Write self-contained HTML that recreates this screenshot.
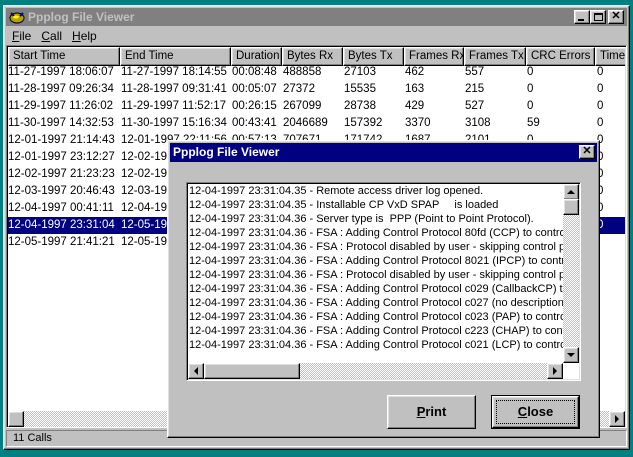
<!DOCTYPE html>
<html><head><style>
*{margin:0;padding:0;box-sizing:border-box}
body{width:633px;height:457px;background:#008080;position:relative;overflow:hidden;font-family:"Liberation Sans",sans-serif;font-size:11px;color:#000}
.abs{position:absolute}
.raised{background:#c0c0c0;border-top:1px solid #fff;border-left:1px solid #fff;border-right:1px solid #000;border-bottom:1px solid #000;box-shadow:inset -1px -1px 0 #808080,inset 1px 1px 0 #dfdfdf}
.sunk{border-top:1px solid #808080;border-left:1px solid #808080;border-right:1px solid #fff;border-bottom:1px solid #fff;box-shadow:inset 1px 1px 0 #000,inset -1px -1px 0 #dfdfdf}
.hdr{position:absolute;top:0;height:19px;line-height:17px;padding-left:4px;font-size:11.5px;white-space:nowrap;overflow:hidden}
.row{position:absolute;left:0;height:17px;line-height:17px;width:620px;font-size:11.5px;white-space:nowrap}
.row span{position:absolute}
.sel{background:#000080;color:#fff}
.dither{background-color:#c0c0c0;background-image:repeating-conic-gradient(#fff 0 25%,#c0c0c0 0 50%);background-size:2px 2px}
.btn{position:absolute;width:16px;height:16px}
.log div{height:14px;line-height:14px;white-space:nowrap;font-size:11px;padding-left:1px}
</style></head><body>
<div class="abs raised" style="left:3px;top:5px;width:627px;height:445px"></div>
<div class="abs" style="left:6px;top:8px;width:621px;height:18px;background:#808080"></div>
<div class="abs" style="left:9px;top:9px;width:16px;height:15px;">
<svg width="16" height="15"><ellipse cx="8" cy="9" rx="7" ry="5" fill="#b8a000" stroke="#000"/><path d="M2 4 L5 7 M14 4 L11 7" stroke="#0000a0" stroke-width="2"/><ellipse cx="7" cy="8" rx="3" ry="1.5" fill="#ff0"/></svg></div>
<div class="abs" style="left:28px;top:9px;color:#c0c0c0;font-weight:bold;font-size:12px;line-height:16px">Ppplog File Viewer</div>
<div class="btn raised" style="left:574px;top:10px;width:16px;height:14px"><div class="abs" style="left:3px;top:8px;width:6px;height:2px;background:#000"></div></div>
<div class="btn raised" style="left:590px;top:10px;width:16px;height:14px"><div class="abs" style="left:3px;top:2px;width:9px;height:8px;border:1px solid #000;border-top-width:2px"></div></div>
<div class="btn raised" style="left:608px;top:10px;width:16px;height:14px;font-size:11px;font-weight:bold;text-align:center;line-height:11px">✕</div>
<div class="abs" style="left:12px;top:29px;font-size:12px;line-height:14px"><u>F</u>ile&nbsp;&nbsp;&nbsp;<u>C</u>all&nbsp;&nbsp;&nbsp;<u>H</u>elp</div>
<div class="abs sunk" style="left:6px;top:45px;width:621px;height:383px;background:#fff"></div>
<div class="abs" style="left:8px;top:47px;width:617px;height:364px;overflow:hidden">
 <div class="hdr raised" style="left:0;width:112px">Start Time</div>
 <div class="hdr raised" style="left:112px;width:111px">End Time</div>
 <div class="hdr raised" style="left:223px;width:51px">Duration</div>
 <div class="hdr raised" style="left:274px;width:61px">Bytes Rx</div>
 <div class="hdr raised" style="left:335px;width:61px">Bytes Tx</div>
 <div class="hdr raised" style="left:396px;width:60px">Frames Rx</div>
 <div class="hdr raised" style="left:456px;width:62px">Frames Tx</div>
 <div class="hdr raised" style="left:518px;width:69px">CRC Errors</div>
 <div class="hdr raised" style="left:587px;width:60px">Timeouts</div>
 <div class="row" style="top:17px"><span style="left:0">11-27-1997 18:06:07</span><span style="left:113px">11-27-1997 18:14:55</span><span style="left:224px">00:08:48</span><span style="left:275px">488858</span><span style="left:336px">27103</span><span style="left:397px">462</span><span style="left:457px">557</span><span style="left:519px">0</span><span style="left:589px">0</span></div>
 <div class="row" style="top:34px"><span style="left:0">11-28-1997 09:26:34</span><span style="left:113px">11-28-1997 09:31:41</span><span style="left:224px">00:05:07</span><span style="left:275px">27372</span><span style="left:336px">15535</span><span style="left:397px">163</span><span style="left:457px">215</span><span style="left:519px">0</span><span style="left:589px">0</span></div>
 <div class="row" style="top:51px"><span style="left:0">11-29-1997 11:26:02</span><span style="left:113px">11-29-1997 11:52:17</span><span style="left:224px">00:26:15</span><span style="left:275px">267099</span><span style="left:336px">28738</span><span style="left:397px">429</span><span style="left:457px">527</span><span style="left:519px">0</span><span style="left:589px">0</span></div>
 <div class="row" style="top:68px"><span style="left:0">11-30-1997 14:32:53</span><span style="left:113px">11-30-1997 15:16:34</span><span style="left:224px">00:43:41</span><span style="left:275px">2046689</span><span style="left:336px">157392</span><span style="left:397px">3370</span><span style="left:457px">3108</span><span style="left:519px">59</span><span style="left:589px">0</span></div>
 <div class="row" style="top:85px"><span style="left:0">12-01-1997 21:14:43</span><span style="left:113px">12-01-1997 22:11:56</span><span style="left:224px">00:57:13</span><span style="left:275px">707671</span><span style="left:336px">171742</span><span style="left:397px">1687</span><span style="left:457px">2101</span><span style="left:519px">0</span><span style="left:589px">0</span></div>
 <div class="row" style="top:102px"><span style="left:0">12-01-1997 23:12:27</span><span style="left:113px">12-02-1997</span><span style="left:589px">0</span></div>
 <div class="row" style="top:119px"><span style="left:0">12-02-1997 21:23:23</span><span style="left:113px">12-02-1997</span><span style="left:589px">0</span></div>
 <div class="row" style="top:136px"><span style="left:0">12-03-1997 20:46:43</span><span style="left:113px">12-03-1997</span><span style="left:589px">0</span></div>
 <div class="row" style="top:153px"><span style="left:0">12-04-1997 00:41:11</span><span style="left:113px">12-04-1997</span><span style="left:589px">0</span></div>
 <div class="row sel" style="top:170px;width:617px"><span style="left:0">12-04-1997 23:31:04</span><span style="left:113px">12-05-1997</span><span style="left:589px">0</span></div>
 <div class="row" style="top:187px"><span style="left:0">12-05-1997 21:41:21</span><span style="left:113px">12-05-1997</span></div>
</div>
<div class="abs dither" style="left:8px;top:411px;width:617px;height:16px"></div>
<div class="btn raised" style="left:8px;top:411px"></div>
<div class="btn raised" style="left:609px;top:411px"><svg width="14" height="14"><path d="M5 3 L9 7 L5 11Z"/></svg></div>
<div class="abs" style="left:6px;top:430px;width:621px;height:17px;border-top:1px solid #808080;border-left:1px solid #808080;border-right:1px solid #fff;border-bottom:1px solid #fff;padding-left:6px;line-height:15px">11 Calls</div>
<div class="abs raised" style="left:167px;top:140px;width:433px;height:298px"></div>
<div class="abs" style="left:170px;top:143px;width:427px;height:19px;background:#000080"></div>
<div class="abs" style="left:173px;top:144px;color:#fff;font-weight:bold;font-size:12px;line-height:17px">Ppplog File Viewer</div>
<div class="btn raised" style="left:579px;top:145px;width:16px;height:14px;font-size:11px;font-weight:bold;text-align:center;line-height:11px">✕</div>
<div class="abs sunk" style="left:186px;top:182px;width:395px;height:199px;background:#fff"></div>
<div class="abs log" style="left:188px;top:184px;width:375px;height:179px;overflow:hidden">
<div>12-04-1997 23:31:04.35 - Remote access driver log opened.</div>
<div>12-04-1997 23:31:04.35 - Installable CP VxD SPAP &nbsp;&nbsp;&nbsp;&nbsp;is loaded</div>
<div>12-04-1997 23:31:04.36 - Server type is &nbsp;PPP (Point to Point Protocol).</div>
<div>12-04-1997 23:31:04.36 - FSA : Adding Control Protocol 80fd (CCP) to control</div>
<div>12-04-1997 23:31:04.36 - FSA : Protocol disabled by user - skipping control p</div>
<div>12-04-1997 23:31:04.36 - FSA : Adding Control Protocol 8021 (IPCP) to contro</div>
<div>12-04-1997 23:31:04.36 - FSA : Protocol disabled by user - skipping control p</div>
<div>12-04-1997 23:31:04.36 - FSA : Adding Control Protocol c029 (CallbackCP) to</div>
<div>12-04-1997 23:31:04.36 - FSA : Adding Control Protocol c027 (no description)</div>
<div>12-04-1997 23:31:04.36 - FSA : Adding Control Protocol c023 (PAP) to control</div>
<div>12-04-1997 23:31:04.36 - FSA : Adding Control Protocol c223 (CHAP) to contro</div>
<div>12-04-1997 23:31:04.36 - FSA : Adding Control Protocol c021 (LCP) to contro</div>
</div>
<div class="abs dither" style="left:563px;top:184px;width:16px;height:179px"></div>
<div class="btn raised" style="left:563px;top:184px"><svg width="14" height="14"><path d="M3 9 L7 5 L11 9Z"/></svg></div>
<div class="btn raised" style="left:563px;top:199px"></div>
<div class="btn raised" style="left:563px;top:347px"><svg width="14" height="14"><path d="M3 5 L7 9 L11 5Z"/></svg></div>
<div class="abs dither" style="left:188px;top:363px;width:375px;height:16px"></div>
<div class="btn raised" style="left:188px;top:363px"><svg width="14" height="14"><path d="M9 3 L5 7 L9 11Z"/></svg></div>
<div class="abs raised" style="left:204px;top:363px;width:96px;height:16px"></div>
<div class="btn raised" style="left:547px;top:363px"><svg width="14" height="14"><path d="M5 3 L9 7 L5 11Z"/></svg></div>
<div class="abs raised" style="left:387px;top:395px;width:89px;height:34px;text-align:center;line-height:32px;font-weight:bold;font-size:13px"><u>P</u>rint</div>
<div class="abs" style="left:491px;top:395px;width:89px;height:34px;border:1px solid #000"><div class="raised" style="width:87px;height:32px;text-align:center;line-height:30px;font-weight:bold;font-size:13px"><span style="display:block;margin:3px;height:24px;line-height:22px;border:1px dotted #000"><u>C</u>lose</span></div></div>
</body></html>
